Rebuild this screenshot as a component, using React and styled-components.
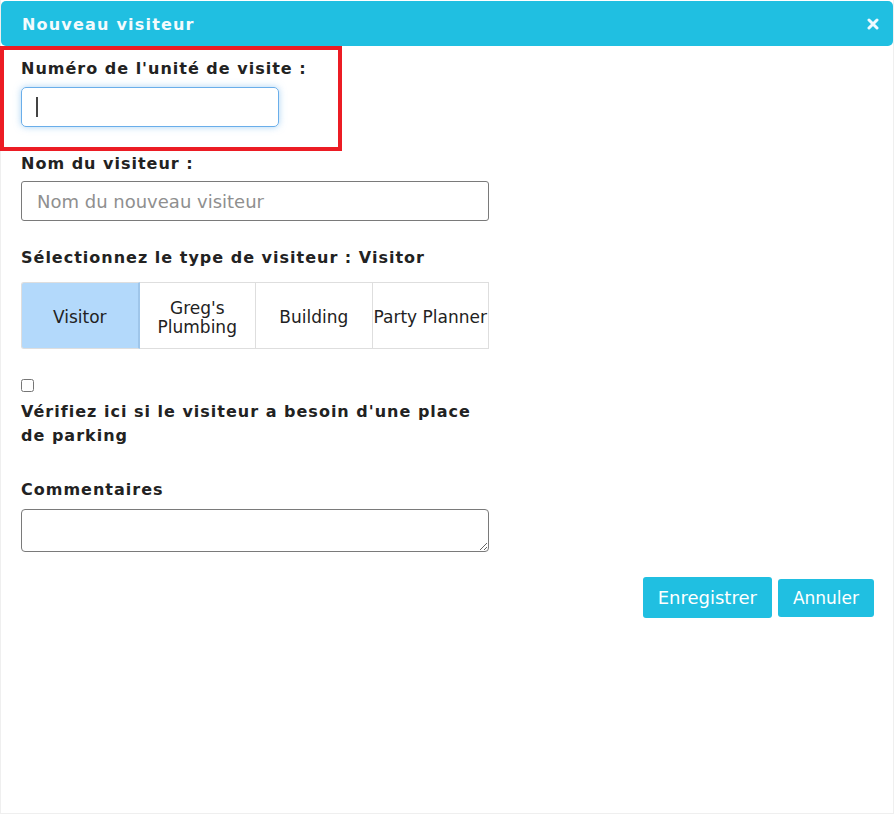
import React, { useState } from "react";
import styled, { createGlobalStyle } from "styled-components";

const Global = createGlobalStyle`
  html, body { margin: 0; padding: 0; background: #ffffff; }
  body { font-family: "DejaVu Sans", Verdana, sans-serif; color: #222; }
  * { box-sizing: border-box; }
`;

const Modal = styled.div`
  width: 894px;
  height: 814px;
  border: 1px solid #efefef;
  border-top: none;
  background: #fff;
  display: flex;
  flex-direction: column;
`;

const Header = styled.div`
  margin-top: 1px;
  height: 45px;
  background: #20bfe1;
  border-radius: 5px;
  display: flex;
  align-items: center;
  justify-content: space-between;
  padding: 1px 14px 0 21px;
  color: #fff;
`;

const Title = styled.h4`
  margin: 0;
  font-size: 16px;
  font-weight: bold;
  letter-spacing: 1.2px;
  color: #f4fbfd;
`;

const Close = styled.button`
  border: none;
  background: transparent;
  padding: 0;
  width: 12px;
  height: 12px;
  display: flex;
  cursor: pointer;
`;

const Form = styled.form`
  padding: 0 20px;
  display: flex;
  flex-direction: column;
`;

const Highlight = styled.div`
  margin-left: -21px;
  width: 342px;
  border: 4px solid #ec1c24;
  padding: 9px 0 20px 17px;
`;

const Label = styled.label`
  display: block;
  max-width: 468px;
  font-size: 16px;
  font-weight: bold;
  letter-spacing: 1px;
  line-height: ${(p) => p.$lh || 20}px;
  margin-top: ${(p) => p.$top || 0}px;
  margin-bottom: ${(p) => p.$bottom || 0}px;
  color: #222;
`;

const TextInput = styled.input`
  display: block;
  width: 468px;
  height: 40px;
  padding: 0 15px;
  font-family: "DejaVu Sans", Verdana, sans-serif;
  font-size: 18px;
  color: #333;
  border: 1px solid #7a7a7a;
  border-radius: 3px;
  outline: none;
  &::placeholder { color: #8f8f8f; }
`;

const Caret = styled.span`
  display: block;
  width: 2px;
  height: 20px;
  background: #444;
`;

const FocusBox = styled.div`
  width: 258px;
  height: 40px;
  border: 1px solid #6aaeea;
  border-radius: 5px;
  box-shadow: 0 0 7px rgba(102, 175, 233, 0.55);
  display: flex;
  align-items: center;
  padding-left: 14px;
`;

const Segments = styled.div`
  display: flex;
  width: 468px;
  height: 67px;
  margin-top: 14px;
`;

const Segment = styled.button`
  flex: 1;
  border: 1px solid #dedede;
  border-left-width: ${(p) => (p.$first ? 1 : 0)}px;
  border-right-color: ${(p) => (p.$active ? "#9fc6ea" : "#dedede")};
  border-right-width: ${(p) => (p.$active ? 2 : 1)}px;
  background: ${(p) => (p.$active ? "#b3d9fb" : "#fff")};
  border-radius: ${(p) => (p.$first ? "3px 0 0 3px" : "0")};
  font-family: "DejaVu Sans", Verdana, sans-serif;
  font-size: 17px;
  line-height: 19px;
  color: #222;
  padding: 4px 0 0 0;
  cursor: pointer;
`;

const Check = styled.input`
  width: 13px;
  height: 13px;
  margin: 30px 0 0 0;
  display: block;
`;

const Comments = styled.textarea`
  display: block;
  width: 468px;
  height: 43px;
  border: 1px solid #7a7a7a;
  border-radius: 4px;
  font-family: "DejaVu Sans", Verdana, sans-serif;
  font-size: 16px;
  resize: vertical;
  outline: none;
`;

const Actions = styled.div`
  display: flex;
  justify-content: flex-end;
  align-items: center;
  gap: 6px;
  margin: 25px -1px 0 0;
`;

const Action = styled.button`
  background: #20bfe1;
  color: #fff;
  border: none;
  border-radius: 3px;
  height: ${(p) => p.$h}px;
  padding: 0 15px;
  font-family: "DejaVu Sans", Verdana, sans-serif;
  font-size: ${(p) => p.$size}px;
  cursor: pointer;
`;

const types = ["Visitor", "Greg's\nPlumbing", "Building", "Party Planner"];

export default function App() {
  const [type, setType] = useState(0);
  const current = types[type].replace("\n", " ");
  return (
    <>
      <Global />
      <Modal>
        <Header>
          <Title>Nouveau visiteur</Title>
          <Close aria-label="Fermer">
            <svg width="12" height="12" viewBox="0 0 12 12">
              <path d="M2 2 L10 10 M10 2 L2 10" stroke="#eefaff" strokeWidth="3" strokeLinecap="round" />
            </svg>
          </Close>
        </Header>
        <Form onSubmit={(e) => e.preventDefault()}>
          <Highlight>
            <Label $bottom={8}>Numéro de l'unité de visite :</Label>
            <FocusBox>
              <Caret />
            </FocusBox>
          </Highlight>
          <Label $top={3} $bottom={7}>Nom du visiteur :</Label>
          <TextInput placeholder="Nom du nouveau visiteur" />
          <Label $top={27}>Sélectionnez le type de visiteur : {current}</Label>
          <Segments>
            {types.map((t, i) => (
              <Segment
                type="button"
                key={t}
                $first={i === 0}
                $active={i === type}
                onClick={() => setType(i)}
              >
                {t.split("\n").map((line) => (
                  <div key={line}>{line}</div>
                ))}
              </Segment>
            ))}
          </Segments>
          <Check type="checkbox" />
          <Label $top={8} $lh={24}>
            Vérifiez ici si le visiteur a besoin d'une place de parking
          </Label>
          <Label $top={32} $bottom={9}>Commentaires</Label>
          <Comments />
          <Actions>
            <Action type="submit" $h={41} $size={18}>Enregistrer</Action>
            <Action type="button" $h={38} $size={17}>Annuler</Action>
          </Actions>
        </Form>
      </Modal>
    </>
  );
}
